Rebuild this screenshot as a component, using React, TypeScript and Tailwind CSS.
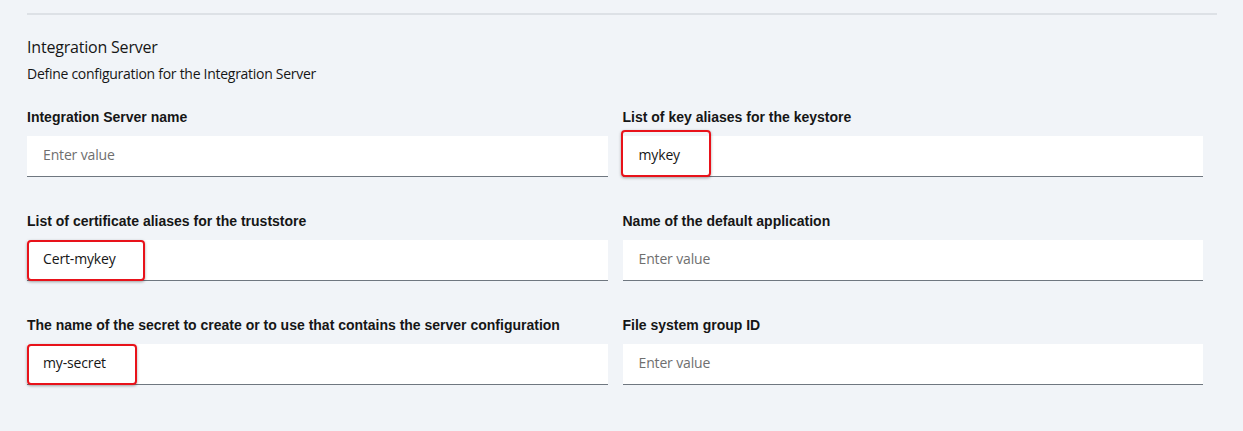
import React from "react";

type Field = {
  label: string;
  value?: string;
  highlight?: "box" | "wide";
};

const rows: [Field, Field][] = [
  [
    { label: "Integration Server name" },
    { label: "List of key aliases for the keystore", value: "mykey", highlight: "wide" },
  ],
  [
    { label: "List of certificate aliases for the truststore", value: "Cert-mykey", highlight: "box" },
    { label: "Name of the default application" },
  ],
  [
    { label: "The name of the secret to create or to use that contains the server configuration", value: "my-secret", highlight: "box" },
    { label: "File system group ID" },
  ],
];

const plex = { fontFamily: '"Open Sans", "Noto Sans", sans-serif' };

function FieldInput({ field }: { field: Field }) {
  return (
    <div className="flex flex-col">
      <label
        className="mb-[10px] h-[17px] text-[14px] leading-[17px] font-bold text-[#161616]"
        style={{ fontFamily: '"Liberation Sans", Arial, sans-serif' }}
      >
        {field.label}
      </label>
      <div className="relative h-[41px] border-b border-[#6f7780] bg-white">
        <span
          className={`absolute top-[9px] left-4 text-[14px] leading-[20px] tracking-[-0.15px] ${field.value ? "text-[#161616]" : "text-[#6f6f6f]"}`}
          style={plex}
        >
          {field.value ?? "Enter value"}
        </span>
        {field.highlight === "wide" && (
          <div className="absolute -top-[6px] -left-[2px] h-[47px] w-[90px] rounded-[4px] border-2 border-[#e8121a] shadow-[0_1px_3px_rgba(0,0,0,0.35)]" />
        )}
        {field.highlight === "box" && (
          <div
            className={`absolute top-0 left-0 h-[41px] rounded-[4px] border-2 border-[#e8121a] shadow-[0_1px_3px_rgba(0,0,0,0.35)] ${field.value === "Cert-mykey" ? "w-[118px]" : "w-[110px]"}`}
          />
        )}
      </div>
    </div>
  );
}

export default function App() {
  return (
    <div className="h-[431px] w-[1243px] overflow-hidden bg-[#f1f4f8]">
      <div className="ml-[27px] w-[1190px] pt-[13px]">
        <div className="h-[2px] bg-[#dde1e6]" />
        <h2 className="mt-[21px] text-[16px] leading-[22px] font-normal tracking-[-0.2px] text-[#161616]" style={plex}>
          Integration Server
        </h2>
        <p className="mt-[6px] text-[14px] leading-[20px] tracking-[-0.28px] text-[#161616]" style={plex}>
          Define configuration for the Integration Server
        </p>
        <div className="mt-[25px] flex w-[1176px] flex-col gap-[36px]">
          {rows.map((row, i) => (
            <div key={i} className="grid grid-cols-2 gap-[15px]">
              <FieldInput field={row[0]} />
              <FieldInput field={row[1]} />
            </div>
          ))}
        </div>
      </div>
    </div>
  );
}
